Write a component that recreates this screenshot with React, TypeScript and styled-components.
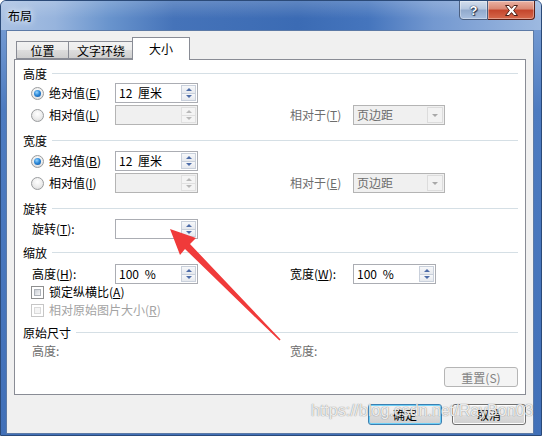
import React from 'react';
import styled, { createGlobalStyle } from 'styled-components';

const Global = createGlobalStyle`
  html, body { margin: 0; padding: 0; }
  body {
    width: 542px; height: 436px; overflow: hidden;
    font-family: "Noto Sans CJK SC", "Noto Sans", sans-serif;
    font-size: 12px;
  }
`;

const FONT = `"Noto Sans CJK SC", "Noto Sans", sans-serif`;

const Window = styled.div`
  position: relative;
  width: 542px;
  height: 436px;
  box-sizing: border-box;
  display: flex;
  flex-direction: column;
  border: 1px solid #2b4a78;
  border-radius: 6px 6px 0 0;
  overflow: hidden;
  background: linear-gradient(180deg, #7fa3d7 0%, #4d7bc0 25%, #4170b8 100%);
`;

const TitleBar = styled.div`
  height: 29px;
  flex: none;
  display: flex;
  align-items: center;
  background:
    linear-gradient(180deg, rgba(255,255,255,0.18) 0%, rgba(255,255,255,0) 60%),
    linear-gradient(90deg, #a9c1e3 0%, #97b4dd 10%, #6994cd 20%, #4573b9 32%, #3b6bb4 55%, #4575bd 68%, #7398d0 80%, #9db9e0 100%);
`;

const Title = styled.div`
  padding-left: 7px;
  font: 12px ${FONT};
  color: #000;
  flex: 1;
  text-shadow: 0 0 6px rgba(255,255,255,0.9), 0 0 10px rgba(255,255,255,0.7);
`;

const Caption = styled.div`
  align-self: flex-start;
  margin-top: -1px;
  margin-right: 6px;
  display: flex;
`;

const CapButton = styled.div<{ $kind: 'help' | 'close' }>`
  box-sizing: border-box;
  height: 20px;
  width: ${p => (p.$kind === 'help' ? 29 : 47)}px;
  border: 1px solid ${p => (p.$kind === 'help' ? '#4b5f80' : '#5a1f16')};
  border-radius: ${p => (p.$kind === 'help' ? '0 0 0 4px' : '0 0 4px 0')};
  ${p => (p.$kind === 'close' ? 'border-left: none;' : '')}
  display: flex;
  align-items: center;
  justify-content: center;
  box-shadow: inset 0 0 0 1px rgba(255,255,255,0.35);
  background: ${p =>
    p.$kind === 'help'
      ? 'linear-gradient(180deg, #d4deec 0%, #b4c6df 45%, #91a9cc 50%, #a9c0e0 100%)'
      : 'linear-gradient(180deg, #eab2a4 0%, #d98672 45%, #c4452c 50%, #d6694c 100%)'};
`;

const HelpGlyph = styled.span`
  font: bold 13px "Liberation Sans", sans-serif;
  color: #fff;
  text-shadow: 0 0 1px #1d2f4d, 0 0 1px #1d2f4d, 1px 1px 1px #1d2f4d;
  line-height: 1;
`;

const Client = styled.div`
  flex: 1;
  margin: 0 7px 1px 5px;
  border: 1px solid #5c7aa6;
  background: #f0f0f0;
  display: flex;
  flex-direction: column;
  padding: 6px 7px 0 7px;
`;

const TabStrip = styled.div`
  height: 22px;
  display: flex;
  align-items: flex-end;
  padding-left: 2px;
  position: relative;
  z-index: 1;
`;

const Tab = styled.div<{ $w: number; $active?: boolean }>`
  box-sizing: border-box;
  width: ${p => p.$w}px;
  height: ${p => (p.$active ? 23 : 18)}px;
  margin-left: ${p => (p.$active ? -1 : 0)}px;
  margin-bottom: ${p => (p.$active ? -1 : 0)}px;
  border: 1px solid #898c95;
  border-bottom: ${p => (p.$active ? 'none' : '1px solid #898c95')};
  ${p => (p.$active ? '' : 'border-right: none;')}
  background: ${p =>
    p.$active ? '#fff' : 'linear-gradient(180deg, #f2f2f2 0%, #ebebeb 50%, #dddddd 51%, #cfcfcf 100%)'};
  display: flex;
  align-items: center;
  justify-content: center;
  padding-bottom: ${p => (p.$active ? 1 : 0)}px;
  font: 12px ${FONT};
  color: #000;
  &:nth-child(2) { border-right: none; }
`;

const Panel = styled.div`
  box-sizing: border-box;
  height: 336px;
  border: 1px solid #898c95;
  background: #fff;
  display: flex;
  flex-direction: column;
  padding-right: 7px;
`;

const Heading = styled.div<{ $top: number }>`
  display: flex;
  align-items: center;
  gap: 5px;
  height: 16px;
  margin-top: ${p => p.$top}px;
  padding-left: 8px;
  font: 12px ${FONT};
  color: #000;
  &::after {
    content: '';
    flex: 1;
    height: 1px;
    background: #d5dfe5;
  }
`;

const Row = styled.div<{ $top: number; $h?: number }>`
  display: grid;
  grid-template-columns: 100px 175px 63px 1fr;
  align-items: center;
  height: ${p => p.$h ?? 20}px;
  margin-top: ${p => p.$top}px;
`;

const Lead = styled.div<{ $pad?: number; $span?: boolean }>`
  display: flex;
  align-items: center;
  gap: 5px;
  padding-left: ${p => p.$pad ?? 16}px;
  white-space: nowrap;
  ${p => (p.$span ? 'grid-column: 1 / -1;' : '')}
`;

const Label = styled.span<{ $tone?: 'normal' | 'dim' | 'faint' }>`
  font: 12px ${FONT};
  white-space: nowrap;
  color: ${p => (p.$tone === 'dim' ? '#6d6d6d' : p.$tone === 'faint' ? '#a3a3a3' : '#000')};
  line-height: 16px;
`;

const Radio = styled.span<{ $checked?: boolean }>`
  box-sizing: border-box;
  width: 13px;
  height: 13px;
  flex: none;
  border-radius: 50%;
  border: 1px solid #9a9c9e;
  background: radial-gradient(circle at 50% 35%, #ffffff 0%, #ececec 55%, #d4d4d4 100%);
  display: flex;
  align-items: center;
  justify-content: center;
  &::after {
    content: '';
    width: 7px;
    height: 7px;
    border-radius: 50%;
    display: ${p => (p.$checked ? 'block' : 'none')};
    background: radial-gradient(circle at 40% 35%, #9ad6ff 0%, #2d8ad9 45%, #0c4c9a 100%);
  }
`;

const Check = styled.span<{ $disabled?: boolean }>`
  box-sizing: border-box;
  width: 13px;
  height: 13px;
  flex: none;
  border: 1px solid ${p => (p.$disabled ? '#c6c6c6' : '#8e8f8f')};
  background: #fff;
  padding: 2px;
  &::after {
    content: '';
    display: block;
    box-sizing: border-box;
    width: 100%;
    height: 100%;
    border: 1px solid ${p => (p.$disabled ? '#dadada' : '#aeb3b9')};
    background: ${p =>
      p.$disabled ? '#f4f4f4' : 'linear-gradient(135deg, #cbcfd5 0%, #e4e6e9 60%, #f6f6f6 100%)'};
  }
`;

const Box = styled.div<{ $w: number; $disabled?: boolean }>`
  box-sizing: border-box;
  width: ${p => p.$w}px;
  height: 20px;
  border: 1px solid ${p => (p.$disabled ? '#b4b4b4' : '#abadb3')};
  background: ${p => (p.$disabled ? '#f0f0f0' : '#fff')};
  display: flex;
  align-items: stretch;
`;

const BoxText = styled.div<{ $dim?: boolean }>`
  flex: 1;
  padding-left: 3px;
  font: 12px ${FONT};
  line-height: 18px;
  word-spacing: 3px;
  color: ${p => (p.$dim ? '#6d6d6d' : '#000')};
  white-space: pre;
`;

const SpinCol = styled.div`
  width: 15px;
  margin: 1px 1px 1px 0;
  display: flex;
  flex-direction: column;
`;

const SpinBtn = styled.div<{ $disabled?: boolean; $down?: boolean }>`
  flex: 1;
  box-sizing: border-box;
  border: 1px solid ${p => (p.$disabled ? '#e0e0e0' : '#c9d0db')};
  ${p => (p.$down ? 'border-top: none;' : '')}
  background: ${p =>
    p.$disabled ? '#f4f4f4' : 'linear-gradient(180deg, #f7f8fa 0%, #e6e9ee 100%)'};
  display: flex;
  align-items: center;
  justify-content: center;
  &::after {
    content: '';
    width: 0;
    height: 0;
    border-left: 3px solid transparent;
    border-right: 3px solid transparent;
    ${p =>
      p.$down
        ? `border-top: 3px solid ${p.$disabled ? '#b9b9b9' : '#4d6ca8'};`
        : `border-bottom: 3px solid ${p.$disabled ? '#b9b9b9' : '#4d6ca8'};`}
  }
`;

const DropBtn = styled.div`
  width: 16px;
  margin: 1px 1px 1px 0;
  box-sizing: border-box;
  border: 1px solid #dcdcdc;
  background: #f2f2f2;
  display: flex;
  align-items: center;
  justify-content: center;
  &::after {
    content: '';
    border-left: 3px solid transparent;
    border-right: 3px solid transparent;
    border-top: 3px solid #a8a8a8;
  }
`;

const ResetRow = styled.div`
  display: flex;
  justify-content: flex-end;
  margin-top: 8px;
`;

const Button = styled.div<{ $variant?: 'default' | 'normal' | 'disabled'; $h?: number }>`
  box-sizing: border-box;
  width: 74px;
  height: ${p => p.$h ?? 21}px;
  border-radius: 3px;
  display: flex;
  align-items: center;
  justify-content: center;
  font: 12px ${FONT};
  border: 1px solid
    ${p => (p.$variant === 'default' ? '#3c7fb1' : p.$variant === 'disabled' ? '#b5b5b5' : '#707070')};
  color: ${p => (p.$variant === 'disabled' ? '#838383' : '#000')};
  background: ${p =>
    p.$variant === 'disabled'
      ? '#f4f4f4'
      : 'linear-gradient(180deg, #f2f2f2 0%, #ebebeb 50%, #dddddd 51%, #cfcfcf 100%)'};
  box-shadow: ${p =>
    p.$variant === 'default'
      ? 'inset 0 0 0 1px #6fd0f7'
      : p.$variant === 'disabled'
      ? 'none'
      : 'inset 0 0 0 1px #fcfcfc'};
`;

const ButtonRow = styled.div`
  display: flex;
  justify-content: flex-end;
  gap: 10px;
  margin-top: 9px;
`;

const Overlay = styled.svg`
  position: absolute;
  left: -1px;
  top: -1px;
  pointer-events: none;
`;

const Watermark = styled.div`
  position: absolute;
  left: 310px;
  top: 401px;
  font: 16px "Liberation Sans", sans-serif;
  color: rgba(255, 255, 255, 0.85);
  text-shadow: 0 0 1px rgba(110, 110, 110, 0.7), 0 0 1px rgba(110, 110, 110, 0.5);
  pointer-events: none;
  white-space: nowrap;
`;

const Spin = ({ w, text, disabled }: { w: number; text?: string; disabled?: boolean }) => (
  <Box $w={w} $disabled={disabled}>
    <BoxText>{text ?? ''}</BoxText>
    <SpinCol>
      <SpinBtn $disabled={disabled} />
      <SpinBtn $disabled={disabled} $down />
    </SpinCol>
  </Box>
);

const Select = ({ text }: { text: string }) => (
  <Box $w={92} $disabled>
    <BoxText $dim>{text}</BoxText>
    <DropBtn />
  </Box>
);

const Key = ({ k }: { k: string }) => (
  <>
    (<u>{k}</u>)
  </>
);

export default function App() {
  return (
    <>
      <Global />
      <Window>
        <TitleBar>
          <Title>布局</Title>
          <Caption>
            <CapButton $kind="help">
              <HelpGlyph>?</HelpGlyph>
            </CapButton>
            <CapButton $kind="close">
              <svg width="15" height="11" viewBox="0 0 15 11">
                <path
                  d="M1.5 0.5h3.6L7.5 3.4 9.9 0.5h3.6L9.6 5.5l3.9 5H9.9L7.5 7.6 5.1 10.5H1.5l3.9-5z"
                  fill="#fff"
                  stroke="#4a1d14"
                  strokeWidth="1"
                  strokeLinejoin="round"
                />
              </svg>
            </CapButton>
          </Caption>
        </TitleBar>
        <Client>
          <TabStrip>
            <Tab $w={52}>位置</Tab>
            <Tab $w={65}>文字环绕</Tab>
            <Tab $w={58} $active>
              大小
            </Tab>
          </TabStrip>
          <Panel>
            <Heading $top={5}>高度</Heading>
            <Row $top={2}>
              <Lead>
                <Radio $checked />
                <Label>
                  绝对值<Key k="E" />
                </Label>
              </Lead>
              <Spin w={83} text="12 厘米" />
            </Row>
            <Row $top={2}>
              <Lead>
                <Radio />
                <Label>
                  相对值<Key k="L" />
                </Label>
              </Lead>
              <Spin w={83} disabled />
              <Label $tone="dim">
                相对于<Key k="T" />
              </Label>
              <Select text="页边距" />
            </Row>

            <Heading $top={7}>宽度</Heading>
            <Row $top={3}>
              <Lead>
                <Radio $checked />
                <Label>
                  绝对值<Key k="B" />
                </Label>
              </Lead>
              <Spin w={83} text="12 厘米" />
            </Row>
            <Row $top={2}>
              <Lead>
                <Radio />
                <Label>
                  相对值<Key k="I" />
                </Label>
              </Lead>
              <Spin w={83} disabled />
              <Label $tone="dim">
                相对于<Key k="E" />
              </Label>
              <Select text="页边距" />
            </Row>

            <Heading $top={7}>旋转</Heading>
            <Row $top={3}>
              <Lead $pad={17}>
                <Label>
                  旋转<Key k="T" />:
                </Label>
              </Lead>
              <Spin w={83} />
            </Row>

            <Heading $top={5}>缩放</Heading>
            <Row $top={4}>
              <Lead $pad={17}>
                <Label>
                  高度<Key k="H" />:
                </Label>
              </Lead>
              <Spin w={83} text="100 %" />
              <Label>
                宽度<Key k="W" />:
              </Label>
              <Spin w={83} text="100 %" />
            </Row>
            <Row $top={0} $h={16}>
              <Lead $span>
                <Check />
                <Label>
                  锁定纵横比<Key k="A" />
                </Label>
              </Lead>
            </Row>
            <Row $top={2} $h={16}>
              <Lead $span>
                <Check $disabled />
                <Label $tone="faint">
                  相对原始图片大小<Key k="R" />
                </Label>
              </Lead>
            </Row>

            <Heading $top={6}>原始尺寸</Heading>
            <Row $top={3} $h={16}>
              <Lead $pad={17}>
                <Label $tone="dim">高度:</Label>
              </Lead>
              <span />
              <Label $tone="dim">宽度:</Label>
            </Row>
            <ResetRow>
              <Button $variant="disabled" $h={20}>
                重置(S)
              </Button>
            </ResetRow>
          </Panel>
          <ButtonRow>
            <Button $variant="default">确定</Button>
            <Button $variant="normal">取消</Button>
          </ButtonRow>
        </Client>
        <Overlay width="542" height="436" viewBox="0 0 542 436">
          <polygon
            points="170,229 196,238 190,244 280.6,339.4 279.4,340.6 185,249 180,255"
            fill="#f03a3a"
          />
        </Overlay>
        <Watermark>https://blog.csdn.net/RayBon03</Watermark>
      </Window>
    </>
  );
}
